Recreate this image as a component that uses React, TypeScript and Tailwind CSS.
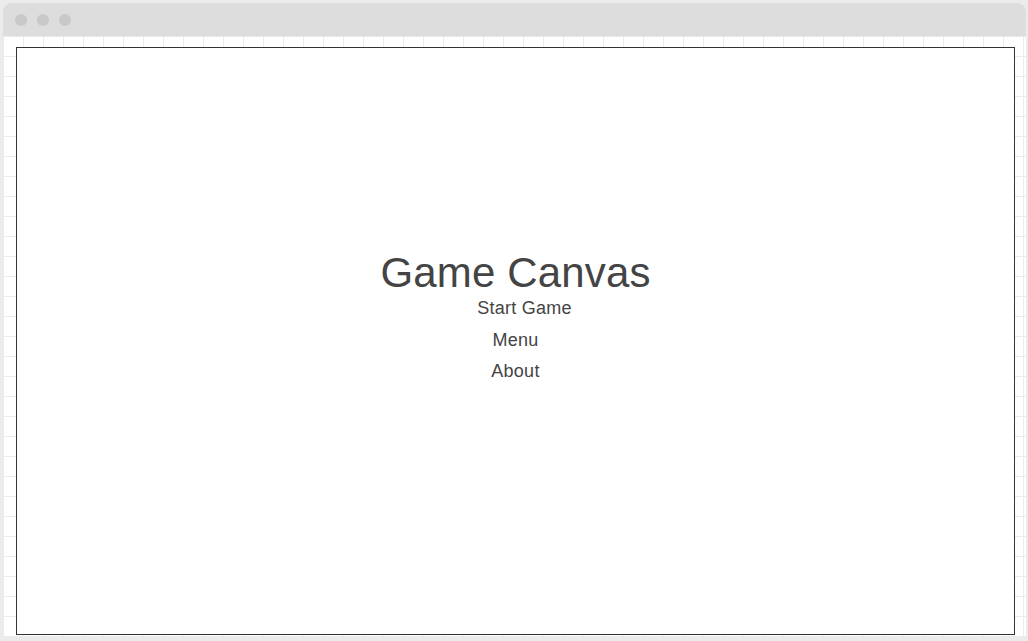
import React from "react";

export default function App() {
  return (
    <div className="h-[641px] w-[1028px] bg-[#ebebeb] pt-[3px] pl-[3px] pr-[2px] pb-[5px] font-['Liberation_Sans',Arial,sans-serif]">
      <div className="flex h-full flex-col overflow-hidden rounded-t-[8px] bg-white">
        <div className="flex h-[33px] shrink-0 items-center gap-[10px] bg-[#dddddd] pl-[12px]">
          <span className="h-[12px] w-[12px] rounded-full bg-[#c8c8c8]" />
          <span className="h-[12px] w-[12px] rounded-full bg-[#c8c8c8]" />
          <span className="h-[12px] w-[12px] rounded-full bg-[#c8c8c8]" />
        </div>
        <div className="flex-1 bg-white bg-[linear-gradient(to_right,#ebebeb_1px,transparent_1px),linear-gradient(to_bottom,#ebebeb_1px,transparent_1px)] bg-[size:20px_20px] pt-[11px] pl-[13px] pr-[11px] pb-[1px]">
          <div className="flex h-full flex-col items-center border border-[#333333] bg-white pt-[204px] text-[#444444]">
            <h1 className="text-[42px] leading-none tracking-[0.15px]">Game Canvas</h1>
            <ul className="mt-[4px] flex flex-col items-center text-[18px] leading-[20px] tracking-[0.25px]">
              <li className="pl-[18px]">Start Game</li>
              <li className="mt-[12px]">Menu</li>
              <li className="mt-[11px]">About</li>
            </ul>
          </div>
        </div>
      </div>
    </div>
  );
}
